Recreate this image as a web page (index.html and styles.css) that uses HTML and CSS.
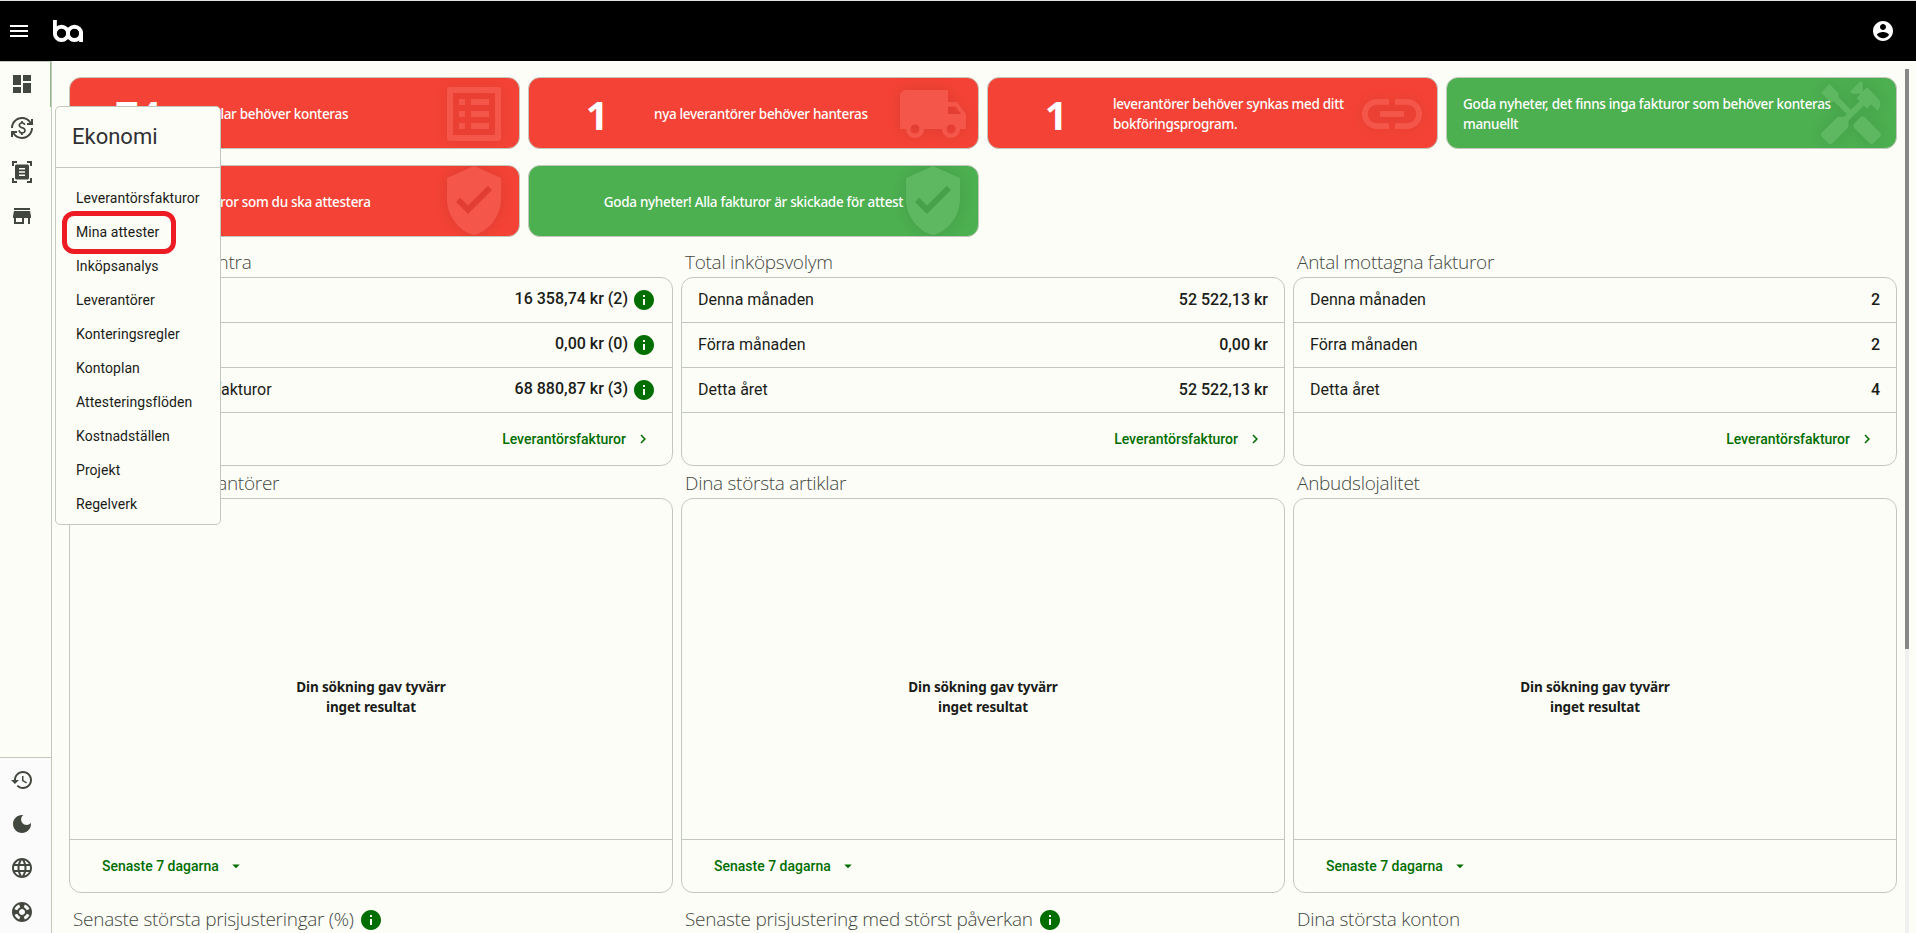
FILE: index.html
```
<!DOCTYPE html>
<html lang="sv">
<head>
    <meta charset="UTF-8">
    <title>Översikt</title>
    <link rel="stylesheet" href="styles.css">
</head>
<body>

<!-- ikoner -->
<svg class="sprite" xmlns="http://www.w3.org/2000/svg">
    <symbol id="i-list" viewBox="0 0 24 24"><path d="M19 5v14H5V5h14m1.1-2H3.9c-.5 0-.9.4-.9.9v16.2c0 .4.4.9.9.9h16.2c.4 0 .9-.5.9-.9V3.9c0-.5-.5-.9-.9-.9zM11 7h6v2h-6V7zm0 4h6v2h-6v-2zm0 4h6v2h-6zM7 7h2v2H7zm0 4h2v2H7zm0 4h2v2H7z"/></symbol>
    <symbol id="i-truck" viewBox="0 0 24 24"><path d="M20 8h-3V4H3c-1.1 0-2 .9-2 2v11h2c0 1.66 1.34 3 3 3s3-1.34 3-3h6c0 1.66 1.34 3 3 3s3-1.34 3-3h2v-5l-3-4zM6 18.5c-.83 0-1.5-.67-1.5-1.5s.67-1.5 1.5-1.5 1.5.67 1.5 1.5-.67 1.5-1.5 1.5zm13.5-9l1.96 2.5H17V9.5h2.5zm-1.5 9c-.83 0-1.5-.67-1.5-1.5s.67-1.5 1.5-1.5 1.5.67 1.5 1.5-.67 1.5-1.5 1.5z"/></symbol>
    <symbol id="i-link" viewBox="0 0 24 24"><path d="M3.9 12c0-1.71 1.39-3.1 3.1-3.1h4V7H7c-2.76 0-5 2.24-5 5s2.24 5 5 5h4v-1.9H7c-1.71 0-3.1-1.39-3.1-3.1zM8 13h8v-2H8v2zm9-6h-4v1.9h4c1.71 0 3.1 1.39 3.1 3.1s-1.39 3.1-3.1 3.1h-4V17h4c2.76 0 5-2.24 5-5s-2.24-5-5-5z"/></symbol>
    <symbol id="i-handyman" viewBox="0 0 24 24"><path d="M21.67 18.17l-5.3-5.3h-.99l-2.54 2.54v.99l5.3 5.3c.39.39 1.02.39 1.41 0l2.12-2.12c.39-.38.39-1.02 0-1.41zM17.34 10.19l1.41-1.41 2.12 2.12c1.17-1.17 1.17-3.07 0-4.24l-3.54-3.54-1.41 1.41V1.71L15.22 1l-3.54 3.54.71.71h2.83l-1.41 1.41 1.06 1.06-2.89 2.89-4.13-4.13V5.06L4.83 2.04 2 4.87 5.03 7.9h1.41l4.13 4.13-.85.85H7.6l-5.3 5.3c-.39.39-.39 1.02 0 1.41l2.12 2.12c.39.39 1.02.39 1.41 0l5.3-5.3v-2.12l5.15-5.15 1.06 1.05z"/></symbol>
    <symbol id="i-shield" viewBox="0 0 24 24"><path d="M12 0L3 4v7c0 5.55 3.84 10.74 9 12 5.16-1.26 9-6.45 9-12V4l-9-4zm-2 16l-4-4 1.41-1.41L10 13.17l6.59-6.59L18 8l-8 8z"/></symbol>
    <symbol id="i-info" viewBox="0 0 24 24"><path d="M12 2C6.48 2 2 6.48 2 12s4.48 10 10 10 10-4.48 10-10S17.52 2 12 2zm1 15h-2v-6h2v6zm0-8h-2V7h2v2z"/></symbol>
    <symbol id="i-chevron" viewBox="0 0 24 24"><path d="M10 6L8.59 7.41 13.17 12l-4.58 4.59L10 18l6-6z"/></symbol>
    <symbol id="i-drop" viewBox="0 0 24 24"><path d="M7 10l5 5 5-5z"/></symbol>
</svg>

<header class="topbar">
    <svg class="icon menu-icon" viewBox="0 0 24 24"><path d="M3 18h18v-2H3v2zm0-5h18v-2H3v2zm0-7v2h18V6H3z"/></svg>
    <svg class="logo" viewBox="0 0 30 22">
        <path d="M1.9 0V13"/>
        <circle cx="8.5" cy="13.4" r="6.6"/>
        <circle cx="21.5" cy="13.4" r="6.6"/>
        <path d="M28.1 13V22"/>
    </svg>
    <svg class="icon user-icon" viewBox="0 0 24 24"><path d="M12 2C6.48 2 2 6.48 2 12s4.48 10 10 10 10-4.48 10-10S17.52 2 12 2zm0 3c1.66 0 3 1.34 3 3s-1.34 3-3 3-3-1.34-3-3 1.34-3 3-3zm0 14.2c-2.5 0-4.71-1.28-6-3.22.03-1.99 4-3.08 6-3.08 1.99 0 5.97 1.09 6 3.08-1.29 1.94-3.5 3.22-6 3.22z"/></svg>
</header>

<div class="layout">
    <nav class="sidebar">
        <div class="side-main">
            <svg class="icon" viewBox="0 0 24 24"><path d="M3 13h8V3H3v10zm0 8h8v-6H3v6zm10 0h8V11h-8v10zm0-18v6h8V3h-8z"/></svg>
            <svg class="icon" viewBox="0 0 24 24"><path d="M12.89 11.1c-1.78-.59-2.64-.96-2.64-1.9 0-1.02 1.11-1.39 1.81-1.39 1.31 0 1.79.99 1.9 1.34l1.58-.67c-.15-.44-.82-1.91-2.66-2.23V5h-1.75v1.26c-2.6.56-2.62 2.85-2.62 2.96 0 2.27 2.25 2.91 3.35 3.31 1.58.56 2.28 1.07 2.28 2.03 0 1.13-1.05 1.61-1.98 1.61-1.82 0-2.34-1.87-2.4-2.09l-1.66.67c.63 2.19 2.28 2.78 2.9 2.96V19h1.75v-1.24c.52-.09 3.02-.59 3.02-3.22.01-1.39-.6-2.61-2.88-3.44zM3 21H1v-6h6v2H4.52c1.61 2.41 4.36 4 7.48 4 4.97 0 9-4.03 9-9h2c0 6.08-4.92 11-11 11-3.72 0-7.01-1.85-9-4.67V21zm-2-9C1 5.92 5.92 1 12 1c3.72 0 7.01 1.85 9 4.67V3h2v6h-6V7h2.48C17.87 4.59 15.12 3 12 3c-4.97 0-9 4.03-9 9H1z"/></svg>
            <svg class="icon" viewBox="0 0 24 24"><path d="M17.5 4.5h-11C5.67 4.5 5 5.17 5 6v12c0 .83.67 1.5 1.5 1.5h11c.83 0 1.5-.67 1.5-1.5V6c0-.83-.67-1.5-1.5-1.5zM15 16H9v-1.5h6V16zm0-3.25H9v-1.5h6v1.5zM15 9.5H9V8h6v1.5zM4 3h3V1H2v5h2V3zm0 15H2v5h5v-2H4v-3zM17 1v2h3v3h2V1h-5zm3 20h-3v2h5v-5h-2v3z"/></svg>
            <svg class="icon" viewBox="0 0 24 24"><path d="M20 4H4v2h16V4zm1 10v-2l-1-5H4l-1 5v2h1v6h10v-6h4v6h2v-6h1zm-9 4H6v-4h6v4z"/></svg>
        </div>
        <div class="side-tools">
            <svg class="icon" viewBox="0 0 24 24"><path d="M13 3c-4.97 0-9 4.03-9 9H1l3.89 3.89.07.14L9 12H6c0-3.87 3.13-7 7-7s7 3.13 7 7-3.13 7-7 7c-1.93 0-3.68-.79-4.94-2.06l-1.42 1.42C8.27 19.99 10.51 21 13 21c4.97 0 9-4.03 9-9s-4.03-9-9-9zm-1 5v5l4.28 2.54.72-1.21-3.5-2.08V8H12z"/></svg>
            <svg class="icon" viewBox="0 0 24 24"><path d="M12 3c-4.97 0-9 4.03-9 9s4.03 9 9 9 9-4.03 9-9c0-.46-.04-.92-.1-1.36-.98 1.37-2.58 2.26-4.4 2.26-2.98 0-5.4-2.42-5.4-5.4 0-1.81.89-3.42 2.26-4.4-.44-.06-.9-.1-1.36-.1z"/></svg>
            <svg class="icon" viewBox="0 0 24 24"><path d="M11.99 2C6.47 2 2 6.48 2 12s4.47 10 9.99 10C17.52 22 22 17.52 22 12S17.52 2 11.99 2zm6.93 6h-2.95c-.32-1.25-.78-2.45-1.38-3.56 1.84.63 3.37 1.91 4.33 3.56zM12 4.04c.83 1.2 1.48 2.53 1.91 3.96h-3.82c.43-1.43 1.08-2.76 1.91-3.96zM4.26 14C4.1 13.36 4 12.69 4 12s.1-1.36.26-2h3.38c-.08.66-.14 1.32-.14 2s.06 1.34.14 2H4.26zm.82 2h2.95c.32 1.25.78 2.45 1.38 3.56-1.84-.63-3.37-1.9-4.33-3.56zm2.95-8H5.08c.96-1.66 2.49-2.93 4.33-3.56C8.81 5.55 8.35 6.75 8.03 8zM12 19.96c-.83-1.2-1.48-2.53-1.91-3.96h3.82c-.43 1.43-1.08 2.76-1.91 3.96zM14.34 14H9.66c-.09-.66-.16-1.32-.16-2s.07-1.35.16-2h4.68c.09.65.16 1.32.16 2s-.07 1.34-.16 2zm.25 5.56c.6-1.11 1.06-2.31 1.38-3.56h2.95c-.96 1.65-2.49 2.93-4.33 3.56zM16.36 14c.08-.66.14-1.32.14-2s-.06-1.34-.14-2h3.38c.16.64.26 1.31.26 2s-.1 1.36-.26 2h-3.38z"/></svg>
            <svg class="icon" viewBox="0 0 24 24"><path d="M12 2C6.48 2 2 6.48 2 12s4.48 10 10 10 10-4.48 10-10S17.52 2 12 2zm7.46 7.12l-2.78 1.15c-.51-1.36-1.58-2.44-2.95-2.94l1.15-2.78c2.1.8 3.77 2.47 4.58 4.57zM12 15c-1.66 0-3-1.34-3-3s1.34-3 3-3 3 1.34 3 3-1.34 3-3 3zM9.13 4.54l1.17 2.78c-1.38.5-2.47 1.59-2.98 2.97L4.54 9.13c.81-2.11 2.48-3.78 4.59-4.59zM4.54 14.87l2.78-1.15c.51 1.38 1.59 2.46 2.97 2.96l-1.17 2.78c-2.1-.81-3.77-2.48-4.58-4.59zm10.34 4.59l-1.15-2.78c1.37-.51 2.45-1.59 2.95-2.97l2.78 1.17c-.81 2.1-2.48 3.77-4.58 4.58z"/></svg>
        </div>
    </nav>

    <main class="content">
        <section class="alerts">
            <div class="alert red first">
                <b>74</b><p>bundlar behöver konteras</p>
                <svg><use href="#i-list"/></svg>
            </div>
            <div class="alert red">
                <b>1</b><p>nya leverantörer behöver hanteras</p>
                <svg><use href="#i-truck"/></svg>
            </div>
            <div class="alert red">
                <b>1</b><p>leverantörer behöver synkas med ditt<br>bokföringsprogram.</p>
                <svg><use href="#i-link"/></svg>
            </div>
            <div class="alert green">
                <p>Goda nyheter, det finns inga fakturor som behöver konteras<br>manuellt</p>
                <svg><use href="#i-handyman"/></svg>
            </div>
            <div class="alert red first">
                <b></b><p>fakturor som du ska attestera</p>
                <svg><use href="#i-shield"/></svg>
            </div>
            <div class="alert green centered">
                <p>Goda nyheter! Alla fakturor är skickade för attest</p>
                <svg><use href="#i-shield"/></svg>
            </div>
        </section>

        <section class="columns">
            <div class="widget">
                <h2>Att hantera på Centra</h2>
                <div class="card">
                    <div class="row info"><strong>16 358,74 kr (2)</strong><svg class="icon"><use href="#i-info"/></svg></div>
                    <div class="row info"><strong>0,00 kr (0)</strong><svg class="icon"><use href="#i-info"/></svg></div>
                    <div class="row info"><span>Öppna leverantörsfakturor</span><strong>68 880,87 kr (3)</strong><svg class="icon"><use href="#i-info"/></svg></div>
                    <div class="card-foot right"><a href="#">Leverantörsfakturor</a><svg><use href="#i-chevron"/></svg></div>
                </div>
            </div>
            <div class="widget">
                <h2>Total inköpsvolym</h2>
                <div class="card">
                    <div class="row"><span>Denna månaden</span><strong>52 522,13 kr</strong></div>
                    <div class="row"><span>Förra månaden</span><strong>0,00 kr</strong></div>
                    <div class="row"><span>Detta året</span><strong>52 522,13 kr</strong></div>
                    <div class="card-foot right"><a href="#">Leverantörsfakturor</a><svg><use href="#i-chevron"/></svg></div>
                </div>
            </div>
            <div class="widget">
                <h2>Antal mottagna fakturor</h2>
                <div class="card">
                    <div class="row"><span>Denna månaden</span><strong>2</strong></div>
                    <div class="row"><span>Förra månaden</span><strong>2</strong></div>
                    <div class="row"><span>Detta året</span><strong>4</strong></div>
                    <div class="card-foot right"><a href="#">Leverantörsfakturor</a><svg><use href="#i-chevron"/></svg></div>
                </div>
            </div>

            <div class="widget">
                <h2>Dina största leverantörer</h2>
                <div class="card">
                    <div class="empty">Din sökning gav tyvärr<br>inget resultat</div>
                    <div class="card-foot"><a href="#">Senaste 7 dagarna</a><svg><use href="#i-drop"/></svg></div>
                </div>
            </div>
            <div class="widget">
                <h2>Dina största artiklar</h2>
                <div class="card">
                    <div class="empty">Din sökning gav tyvärr<br>inget resultat</div>
                    <div class="card-foot"><a href="#">Senaste 7 dagarna</a><svg><use href="#i-drop"/></svg></div>
                </div>
            </div>
            <div class="widget">
                <h2>Anbudslojalitet</h2>
                <div class="card">
                    <div class="empty">Din sökning gav tyvärr<br>inget resultat</div>
                    <div class="card-foot"><a href="#">Senaste 7 dagarna</a><svg><use href="#i-drop"/></svg></div>
                </div>
            </div>

            <div class="widget next">
                <h2>Senaste största prisjusteringar (%)<svg class="icon"><use href="#i-info"/></svg></h2>
            </div>
            <div class="widget next">
                <h2>Senaste prisjustering med störst påverkan<svg class="icon"><use href="#i-info"/></svg></h2>
            </div>
            <div class="widget next">
                <h2>Dina största konton</h2>
            </div>
        </section>
    </main>

    <div class="scrollbar"><div class="thumb"></div></div>
</div>

<!-- undermeny -->
<div class="submenu">
    <h3>Ekonomi</h3>
    <ul>
        <li>Leverantörsfakturor</li>
        <li class="marked">Mina attester</li>
        <li>Inköpsanalys</li>
        <li>Leverantörer</li>
        <li>Konteringsregler</li>
        <li>Kontoplan</li>
        <li>Attesteringsflöden</li>
        <li>Kostnadställen</li>
        <li>Projekt</li>
        <li>Regelverk</li>
    </ul>
</div>
</body>
</html>
```
FILE: styles.css
```
*,*::after{box-sizing:border-box;}
body,h2,h3,p,ul{margin:0;padding:0;}
body{
    height:933px;
    overflow:hidden;
    background:#fdfdf7;
    color:#1a1c18;
    font:16px/24px Roboto, sans-serif;
}
ul{list-style:none;}
a{color:#006e00;text-decoration:none;}
svg{display:block;flex:none;fill:currentColor;}
.sprite{display:none;}
.icon{width:24px;height:24px;}

.topbar{
    height:61px;
    padding:0 21px 0 7px;
    display:flex;
    align-items:center;
    background:#000;
    border-top:1px solid #dfe4df;
    color:#fff;
}
.menu-icon{margin-right:22px;}
.logo{
    width:30px;
    height:22px;
    fill:none;
    stroke:#fff;
    stroke-width:3.9;
}
.user-icon{margin-left:auto;}

.layout{
    height:872px;
    display:flex;
}
.sidebar{
    width:52px;
    display:flex;
    flex-direction:column;
    border-right:1px solid #c3c8bc;
    color:#43483f;
}
.side-main,.side-tools{
    display:flex;
    flex-direction:column;
    gap:20px;
    padding:10px 0 0 10px;
}
.side-main{
    flex:1;
    border-top:1px solid #c3c8bc;
    background:linear-gradient(#8fb887,#8fb887) right top/1px 45px no-repeat;
}
.side-tools{
    height:176px;
    background:#fbfbfb;
    border-top:1px solid #c3c8bc;
}

.content{
    flex:1;
    overflow:hidden;
    padding:16px 8px 0 17px;
}
.alerts{
    display:grid;
    grid-template-columns:repeat(4,1fr);
    grid-auto-rows:72px;
    gap:16px 8px;
    margin-bottom:8px;
}
.alert{
    position:relative;
    display:flex;
    align-items:center;
    overflow:hidden;
    padding:1px 0 0 16px;
    border:1px solid #c3c8bc;
    border-radius:12px;
    color:#fff;
    font:500 13.5px/20px "Noto Sans", sans-serif;
    letter-spacing:-.32px;
}
.alert b{
    width:104px;
    margin-right:5px;
    padding-top:3px;
    text-align:center;
    font-size:40px;
    font-weight:700;
}
.alert svg{
    position:absolute;
    top:0;
    right:9px;
    width:72px;
    height:72px;
    opacity:.1;
    filter:drop-shadow(0 0 8px #000);
}
.first b{margin-right:-2px;}
.red{background:#f44336;}
.green{background:#4caf50;}
.centered{
    justify-content:center;
    padding-left:0;
}

.columns{
    display:grid;
    grid-template-columns:repeat(3,1fr);
    column-gap:8px;
}
h2{
    height:32px;
    padding:3px 0 0 4px;
    display:flex;
    align-items:center;
    color:#43483f;
    font:300 19px/29px "Open Sans", sans-serif;
    letter-spacing:-.28px;
}
h2 .icon{
    margin-left:5px;
    color:#006e00;
}
.next h2{margin-top:9px;}
.card{
    border:1px solid #c3c8bc;
    border-radius:12px;
}
.row{
    height:45px;
    padding:0 16px;
    display:flex;
    align-items:center;
    border-bottom:1px solid #c3c8bc;
}
.row strong{
    margin-left:auto;
    font-weight:500;
}
.row .icon{
    margin-left:4px;
    color:#006e00;
}
.info strong{padding-bottom:2px;}
.card-foot{
    height:52px;
    padding-left:32px;
    display:flex;
    align-items:center;
    color:#006e00;
    font-size:14px;
    font-weight:500;
}
.card-foot svg{
    width:18px;
    height:18px;
    margin-left:8px;
}
.right{
    justify-content:flex-end;
    padding-right:20px;
}
.empty{
    height:341px;
    padding-top:55px;
    display:flex;
    align-items:center;
    justify-content:center;
    border-bottom:1px solid #c3c8bc;
    text-align:center;
    font:700 13.5px/20px "Noto Sans", sans-serif;
    letter-spacing:-.15px;
}

.scrollbar{
    width:4px;
    margin:8px 7px 0 0;
    background:#f0f0f0;
}
.thumb{
    height:580px;
    background:#888;
}

.submenu{
    position:absolute;
    left:55px;
    top:106px;
    width:166px;
    height:419px;
    background:#fdfdf7;
    border:1px solid #c3c8bc;
    border-radius:5px;
}
.submenu h3{
    height:61px;
    padding-left:16px;
    border-bottom:1px solid #c3c8bc;
    font-size:22px;
    line-height:60px;
    font-weight:400;
    color:#2f3033;
}
.submenu ul{padding:13px 0 0 20px;}
.submenu li{
    position:relative;
    height:34px;
    font-size:14px;
    line-height:35px;
    letter-spacing:.06px;
}
/* röd ring runt vald rad */
.marked::after{
    content:"";
    position:absolute;
    left:-14px;
    top:-4px;
    width:114px;
    height:43px;
    border:5px solid #ed1c24;
    border-radius:12px;
}
```
